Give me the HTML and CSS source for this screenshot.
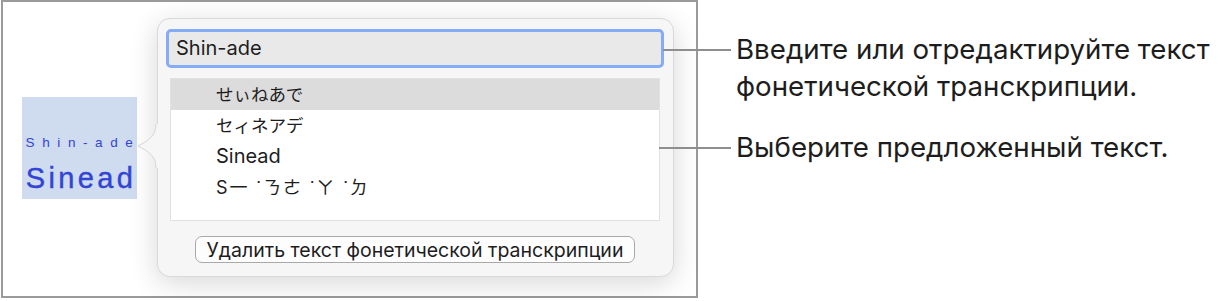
FILE: index.html
```html
<!DOCTYPE html>
<html lang="ru">
<head>
    <meta charset="UTF-8">
    <meta name="viewport" content="width=device-width, initial-scale=1.0">
    <title>Фонетическая транскрипция</title>
    <link rel="stylesheet" href="styles.css">
</head>
<body>
    <div class="figure">
        <div class="frame">
            <div class="selection">
                <div class="ruby">Shin-ade</div>
                <div class="base">Sinead</div>
            </div>
            <div class="popover">
                <svg class="arrow" width="22" height="44" viewBox="0 0 22 44">
                    <path d="M21 0 L19 0 C19 12 12 16 1 22 C12 28 19 32 19 44 L21 44 Z" fill="#f6f6f6"/>
                    <path d="M19 0 C19 12 12 16 1 22 C12 28 19 32 19 44" fill="none" stroke="#d6d6d6" stroke-width="1"/>
                </svg>
                <div class="field">Shin-ade</div>
                <ul class="list">
                    <li class="item cjk selected">せぃねあで</li>
                    <li class="item cjk">セィネアデ</li>
                    <li class="item">Sinead</li>
                    <li class="item bopomofo">S一 ˙ㄋㄜ ˙ㄚ ˙ㄉ</li>
                </ul>
                <div class="actions">
                    <button class="remove-button">Удалить текст фонетической транскрипции</button>
                </div>
            </div>
        </div>
        <div class="notes">
            <p class="note note-field">Введите или отредактируйте текст фонетической транскрипции.</p>
            <p class="note note-list">Выберите предложенный текст.</p>
        </div>
    </div>
</body>
</html>
```

FILE: styles.css
```css
body {
    margin: 0;
    background-color: #fff;
    font-family: Inter, "Noto Sans CJK JP", sans-serif;
    color: #1d1d1d;
}
.figure {
    display: flex;
    align-items: flex-start;
}
.frame {
    box-sizing: border-box;
    width: 698px;
    height: 298px;
    margin-left: 1px;
    border: 2px solid #9a9a9a;
    display: flex;
    align-items: center;
    padding-left: 19px;
    padding-bottom: 3px;
}
.selection {
    box-sizing: border-box;
    width: 115px;
    height: 102px;
    padding-bottom: 4px;
    background-color: #cfdbee;
    display: flex;
    flex-direction: column;
    align-items: center;
    justify-content: flex-end;
    color: #3244d6;
    font-family: "Liberation Sans", Arial, sans-serif;
}
.ruby {
    font-size: 13.5px;
    line-height: 16px;
    letter-spacing: 7.6px;
    margin-right: -7px;
}
.base {
    font-size: 29px;
    letter-spacing: 3.4px;
    margin-right: -3px;
    line-height: 34px;
    margin-top: 10px;
    -webkit-text-stroke: 0.4px #3244d6;
}
.popover {
    position: relative;
    box-sizing: border-box;
    width: 517px;
    height: 259px;
    margin-left: 20px;
    background-color: #f6f6f6;
    border: 1px solid #d9d9d9;
    border-radius: 13px;
    box-shadow: 0 6px 28px rgba(0, 0, 0, 0.16);
    padding: 10px 9px 0 8px;
}
.arrow {
    position: absolute;
    left: -21px;
    top: 105px;
}
.field {
    box-sizing: border-box;
    height: 39px;
    border: 3px solid #86acf7;
    border-radius: 5px;
    background-color: #e9e9e9;
    font-size: 20px;
    line-height: 33px;
    padding-left: 7px;
}
.list {
    list-style: none;
    box-sizing: border-box;
    margin: 10px 4px 0 4px;
    padding: 0 0 18px 0;
    height: 143px;
    background-color: #fff;
    border: 1px solid #e1e1e1;
}
.item {
    height: 31px;
    line-height: 31px;
    padding-left: 45px;
    font-size: 20px;
}
.item.cjk {
    font-size: 17.5px;
}
.item.selected {
    background-color: #dcdcdc;
}
.item.bopomofo {
    font-family: Inter, "Noto Sans CJK TC", sans-serif;
    font-size: 18px;
    letter-spacing: 2px;
}
.actions {
    display: flex;
    justify-content: center;
    margin-top: 15px;
}
.remove-button {
    box-sizing: border-box;
    width: 440px;
    height: 27px;
    background-color: #fdfdfd;
    border: 1px solid #a9a9a9;
    border-radius: 7px;
    font-family: Inter, sans-serif;
    font-size: 19.5px;
    line-height: 24px;
    color: #1d1d1d;
    padding: 0;
}
.notes {
    padding-left: 38px;
    padding-top: 31px;
}
.note {
    position: relative;
    margin: 0;
    font-size: 27.7px;
    line-height: 37px;
    width: 490px;
}
.note::before {
    content: "";
    position: absolute;
    top: 18px;
    height: 2px;
    background-color: #8e8e8e;
}
.note-field::before {
    left: -73px;
    width: 68px;
}
.note-list {
    margin-top: 24px;
}
.note-list::before {
    left: -77px;
    width: 72px;
}
```
